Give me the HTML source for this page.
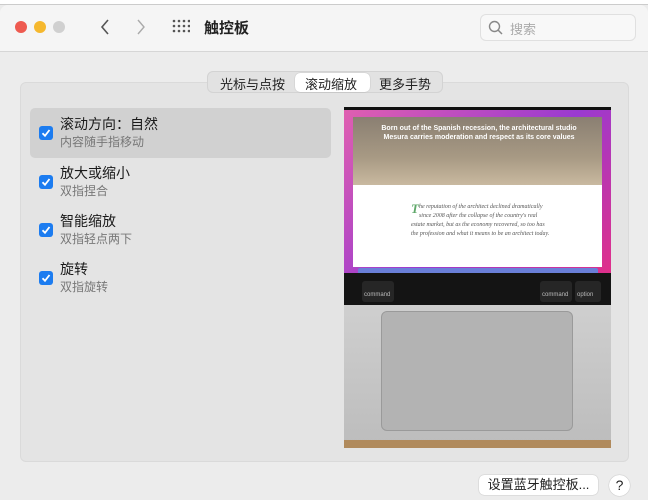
<!DOCTYPE html>
<html><head><meta charset="utf-8"><style>
*{margin:0;padding:0;box-sizing:border-box}
body{width:648px;height:500px;background:#ececec;font-family:"Liberation Sans","Noto Sans CJK SC",sans-serif;position:relative;overflow:hidden}
.abs{position:absolute}
.top{left:0;top:0;width:648px;height:5px;background:#fff;border-bottom:1px solid #ccc}
.tb{left:0;top:5px;width:648px;height:47px;background:#f5f5f5;border-bottom:1px solid #d6d6d6;border-radius:8px 8px 0 0}
.dot{width:12px;height:12px;border-radius:50%;top:21px}
.panel{left:20px;top:82px;width:609px;height:380px;background:#e4e4e4;border:1px solid #dadada;border-radius:6px}
.tabs{left:207px;top:71px;width:236px;height:22px;background:#e2e2e2;border:1px solid #d3d3d3;border-radius:6px;font-size:13px;color:#222}
.tabs span{position:absolute;top:2px}
.sel{left:87px;top:1px;width:75px;height:19px;background:#fff;border-radius:5px;box-shadow:0 0 1px rgba(0,0,0,.3)}
.row{left:30px;width:301px;height:50px}
.cb{left:9px;top:18px;width:14px;height:14px;background:#1c7cf0;border-radius:3px}
.cb svg{position:absolute;left:0;top:0}
.t1{left:30px;top:6px;font-size:14px;color:#1a1a1a}
.t2{left:30px;top:25px;font-size:12px;color:#777}
</style></head><body>
<div class="abs top"></div>
<div class="abs tb"></div>
<div class="abs dot" style="left:15px;background:#ee5a50"></div>
<div class="abs dot" style="left:34px;background:#f5b82e"></div>
<div class="abs dot" style="left:53px;background:#d0d0d0"></div>
<svg class="abs" style="left:98px;top:17px" width="60" height="20"><path d="M10 3 L4 10 L10 17" stroke="#555" stroke-width="1.6" fill="none"/><path d="M40 3 L46 10 L40 17" stroke="#aaa" stroke-width="1.4" fill="none"/></svg>
<svg class="abs" style="left:172px;top:19px" width="18" height="16"><g fill="#555"><circle cx="2" cy="2" r="1.3"/><circle cx="7" cy="2" r="1.3"/><circle cx="12" cy="2" r="1.3"/><circle cx="17" cy="2" r="1.3"/><circle cx="2" cy="7" r="1.3"/><circle cx="7" cy="7" r="1.3"/><circle cx="12" cy="7" r="1.3"/><circle cx="17" cy="7" r="1.3"/><circle cx="2" cy="12" r="1.3"/><circle cx="7" cy="12" r="1.3"/><circle cx="12" cy="12" r="1.3"/><circle cx="17" cy="12" r="1.3"/></g></svg>
<div class="abs" style="left:204px;top:17px;font-size:15px;font-weight:bold;color:#222">触控板</div>
<div class="abs" style="left:480px;top:14px;width:156px;height:27px;background:#f8f8f8;border:1px solid #e0e0e0;border-radius:6px"></div>
<svg class="abs" style="left:488px;top:20px" width="16" height="16"><circle cx="6.5" cy="6.5" r="5" stroke="#888" stroke-width="1.4" fill="none"/><path d="M10 10 L14 14" stroke="#888" stroke-width="1.5"/></svg>
<div class="abs" style="left:510px;top:19px;font-size:13px;color:#aaa">搜索</div>
<div class="abs panel"></div>
<div class="abs tabs"><div class="abs sel"></div><span style="left:12px">光标与点按</span><span style="left:97px">滚动缩放</span><span style="left:171px">更多手势</span></div>
<div class="abs row" style="top:108px;background:#d1d1d1;border-radius:5px"><div class="abs cb"><svg width="14" height="14"><path d="M3.5 7.2 L6 9.8 L10.5 4" stroke="#fff" stroke-width="1.8" fill="none"/></svg></div><div class="abs t1">滚动方向：自然</div><div class="abs t2">内容随手指移动</div></div>
<div class="abs row" style="top:157px"><div class="abs cb"><svg width="14" height="14"><path d="M3.5 7.2 L6 9.8 L10.5 4" stroke="#fff" stroke-width="1.8" fill="none"/></svg></div><div class="abs t1">放大或缩小</div><div class="abs t2">双指捏合</div></div>
<div class="abs row" style="top:205px"><div class="abs cb"><svg width="14" height="14"><path d="M3.5 7.2 L6 9.8 L10.5 4" stroke="#fff" stroke-width="1.8" fill="none"/></svg></div><div class="abs t1">智能缩放</div><div class="abs t2">双指轻点两下</div></div>
<div class="abs row" style="top:253px"><div class="abs cb"><svg width="14" height="14"><path d="M3.5 7.2 L6 9.8 L10.5 4" stroke="#fff" stroke-width="1.8" fill="none"/></svg></div><div class="abs t1">旋转</div><div class="abs t2">双指旋转</div></div>
<!-- image -->
<div class="abs" style="left:344px;top:107px;width:267px;height:341px;background:#c8c8c8;overflow:hidden">
<div class="abs" style="left:0;top:0;width:267px;height:3px;background:#111"></div>
<div class="abs" style="left:0;top:3px;width:267px;height:163px;background:linear-gradient(135deg,#e05fb0,#9a3ad0 55%,#e0308a)"></div>
<div class="abs" style="left:9px;top:10px;width:249px;height:68px;background:linear-gradient(#8a7f72,#a89a84 60%,#c9b9a0)"></div>
<div class="abs" style="left:30px;top:17px;width:210px;font-size:7px;color:#fff;font-weight:bold;text-align:center;line-height:9px">Born out of the Spanish recession, the architectural studio Mesura carries moderation and respect as its core values</div>
<div class="abs" style="left:9px;top:78px;width:249px;height:82px;background:#fff"></div>
<div class="abs" style="left:67px;top:96px;width:140px;font-size:6px;color:#555;font-style:italic;line-height:9px;font-family:'Liberation Serif',serif"><b style="color:#5fa86a;font-size:13px;float:left;line-height:12px">T</b>he reputation of the architect declined dramatically since 2008 after the collapse of the country's real estate market, but as the economy recovered, so too has the profession and what it means to be an architect today.</div>
<div class="abs" style="left:14px;top:161px;width:240px;height:7px;background:#6a7fd8;border-radius:2px"></div>
<div class="abs" style="left:0;top:166px;width:267px;height:32px;background:#141414"></div>
<div class="abs" style="left:18px;top:174px;width:32px;height:21px;background:#262626;border-radius:3px"></div>
<div class="abs" style="left:196px;top:174px;width:32px;height:21px;background:#262626;border-radius:3px"></div>
<div class="abs" style="left:231px;top:174px;width:26px;height:21px;background:#262626;border-radius:3px"></div>
<div class="abs" style="left:20px;top:185px;font-size:6px;color:#bbb">command</div>
<div class="abs" style="left:198px;top:185px;font-size:6px;color:#bbb">command</div>
<div class="abs" style="left:233px;top:185px;font-size:6px;color:#bbb">option</div>
<div class="abs" style="left:0;top:198px;width:267px;height:137px;background:linear-gradient(#cfcfcf,#bdbdbd)"></div>
<div class="abs" style="left:37px;top:204px;width:192px;height:120px;background:#b3b3b3;border:1px solid #9a9a9a;border-radius:6px"></div>
<div class="abs" style="left:0;top:333px;width:267px;height:8px;background:#b08a5c"></div>
</div>
<div class="abs" style="left:479px;top:475px;width:119px;height:20px;background:#fff;border-radius:5px;box-shadow:0 0 1px rgba(0,0,0,.4);font-size:13px;color:#222;text-align:center;line-height:19px">设置蓝牙触控板...</div>
<div class="abs" style="left:609px;top:475px;width:21px;height:21px;background:#fff;border-radius:50%;box-shadow:0 0 1px rgba(0,0,0,.4);font-size:14px;text-align:center;line-height:21px;color:#222">?</div>
</body></html>
